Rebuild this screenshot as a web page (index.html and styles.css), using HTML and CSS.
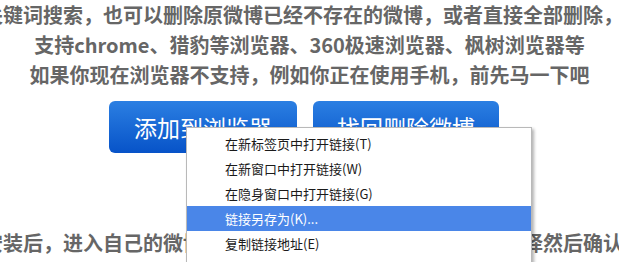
FILE: index.html
```html
<!DOCTYPE html>
<html lang="zh-CN">
<head>
<meta charset="utf-8">
<title>删除微博</title>
<link rel="stylesheet" href="styles.css">
</head>
<body>
<div class="page">
  <div class="line shift">关键词搜索，也可以删除原微博已经不存在的微博，或者直接全部删除，一键清空</div>
  <div class="line center">支持chrome、猎豹等浏览器、360极速浏览器、枫树浏览器等</div>
  <div class="line center">如果你现在浏览器不支持，例如你正在使用手机，前先马一下吧</div>
  <div class="actions">
    <a class="btn btn-add" href="#">添加到浏览器</a>
    <a class="btn btn-back" href="#">找回删除微博</a>
  </div>
  <div class="line shift bottom">安装后，进入自己的微博页面，点击书签栏上的删除按钮，选择然后确认删除即可</div>
</div>
<ul class="menu">
  <li class="item">在新标签页中打开链接(T)</li>
  <li class="item">在新窗口中打开链接(W)</li>
  <li class="item">在隐身窗口中打开链接(G)</li>
  <li class="item active">链接另存为(K)...</li>
  <li class="item">复制链接地址(E)</li>
  <li class="item">检查(N)</li>
</ul>
</body>
</html>
```

FILE: styles.css
```css
html, body {
  margin: 0;
  padding: 0;
  background: #ffffff;
}
body {
  width: 619px;
  height: 262px;
  overflow: hidden;
  position: relative;
  font-family: "Noto Sans CJK SC", "Noto Sans", sans-serif;
}
.page {
  display: flex;
  flex-direction: column;
}
.line {
  height: 30px;
  line-height: 30px;
  font-size: 20px;
  font-weight: 700;
  color: #666666;
  white-space: nowrap;
}
.line.center {
  text-align: center;
}
.line.shift {
  margin-left: -17px;
}
.actions {
  display: flex;
  gap: 16px;
  padding-left: 109px;
  margin-top: 11px;
}
.btn {
  display: flex;
  align-items: center;
  justify-content: center;
  height: 52px;
  border-radius: 6px;
  background: linear-gradient(#2b7fe2, #0753c8);
  color: #ffffff;
  font-size: 23px;
  text-decoration: none;
  box-sizing: border-box;
}
.btn-add {
  width: 188px;
}
.btn-back {
  width: 186px;
}
.bottom {
  margin-top: 75px;
}
.menu {
  position: absolute;
  left: 186px;
  top: 127px;
  width: 346px;
  margin: 0;
  padding: 3px 0;
  list-style: none;
  background: #ffffff;
  border: 1px solid #b9b9b9;
  box-shadow: 2px 2px 3px rgba(0, 0, 0, 0.3);
  box-sizing: border-box;
}
.item {
  height: 25px;
  line-height: 25px;
  padding-left: 38px;
  font-size: 13px;
  color: #1a1a1a;
  white-space: nowrap;
}
.item.active {
  background: #4a86e8;
  color: #ffffff;
}
```
